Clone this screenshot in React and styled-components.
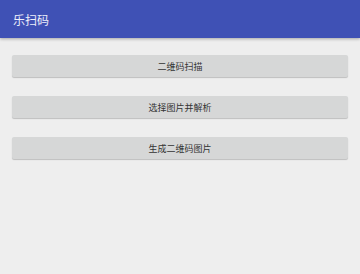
import styled, { createGlobalStyle } from "styled-components";

const GlobalStyle = createGlobalStyle`
  html, body {
    margin: 0;
    padding: 0;
    background: #eeeeee;
    font-family: Roboto, "Noto Sans CJK SC", sans-serif;
  }
`;

const Page = styled.div`
  width: 360px;
  height: 274px;
  background: #eeeeee;
  display: flex;
  flex-direction: column;
`;

const AppBar = styled.header`
  height: 38px;
  background: #3f51b5;
  display: flex;
  align-items: center;
  padding: 0 13px;
  box-shadow: 0 1px 3px rgba(0, 0, 0, 0.3);
  color: #eef0fa;
  font-size: 12px;
`;

const Actions = styled.div`
  display: flex;
  flex-direction: column;
  gap: 19px;
  padding: 17px 12px 0;
`;

const ActionButton = styled.button`
  height: 22px;
  border: none;
  border-radius: 2px;
  background: #d6d7d7;
  box-shadow: 0 1px 1px rgba(0, 0, 0, 0.2);
  color: #333333;
  font-family: Roboto, "Noto Sans CJK SC", sans-serif;
  font-size: 9px;
  padding: 0;
`;

const actions = ["二维码扫描", "选择图片并解析", "生成二维码图片"];

function App() {
  return (
    <Page>
      <GlobalStyle />
      <AppBar>乐扫码</AppBar>
      <Actions>
        {actions.map((label) => (
          <ActionButton key={label}>{label}</ActionButton>
        ))}
      </Actions>
    </Page>
  );
}

export default App;
